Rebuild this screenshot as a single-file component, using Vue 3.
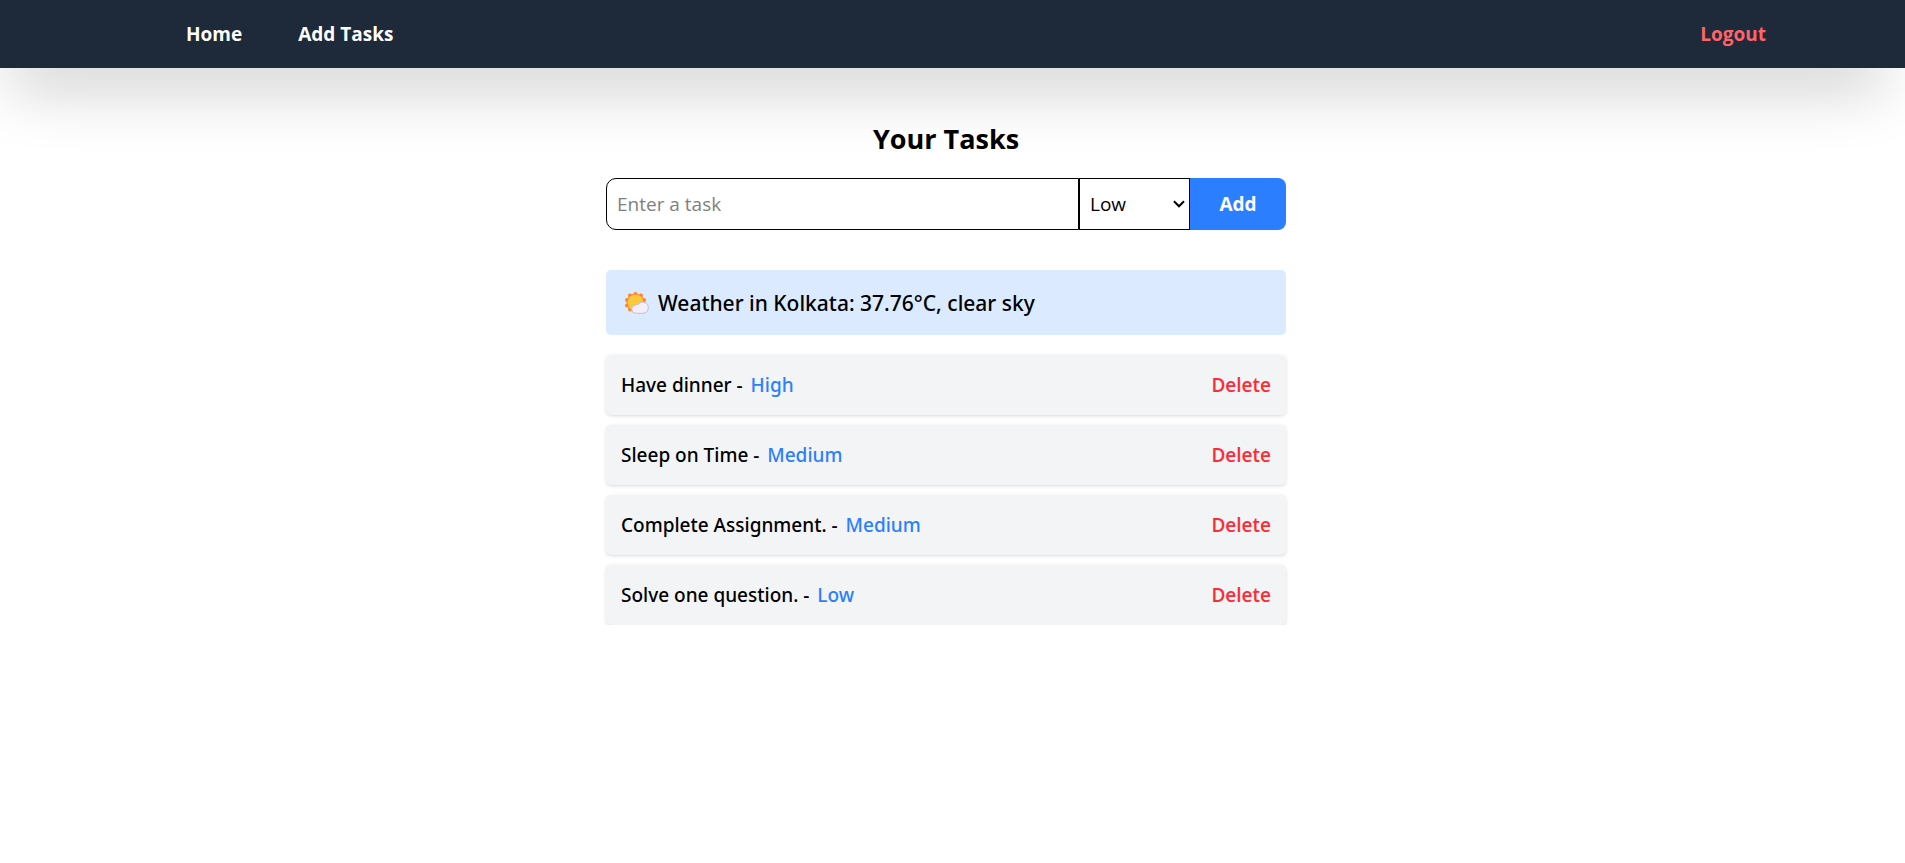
<script setup>
import { ref } from 'vue'

const newTask = ref('')
const newPriority = ref('Low')
const priorities = ['Low', 'Medium', 'High']
const tasks = ref([
  { id: 1, title: 'Have dinner', priority: 'High' },
  { id: 2, title: 'Sleep on Time', priority: 'Medium' },
  { id: 3, title: 'Complete Assignment.', priority: 'Medium' },
  { id: 4, title: 'Solve one question.', priority: 'Low' }
])

function addTask() {
  const title = newTask.value.trim()
  if (!title) return
  tasks.value.push({ id: Date.now(), title, priority: newPriority.value })
  newTask.value = ''
}

function removeTask(id) {
  tasks.value = tasks.value.filter((task) => task.id !== id)
}
</script>

<template>
  <div class="page">
    <nav class="navbar">
      <div class="links">
        <a href="#home">Home</a>
        <a href="#add">Add Tasks</a>
      </div>
      <button class="logout" type="button">Logout</button>
    </nav>

    <main class="content">
      <h1>Your Tasks</h1>

      <form class="task-form" @submit.prevent="addTask">
        <input v-model="newTask" type="text" placeholder="Enter a task" aria-label="Task" />
        <div class="select-wrap">
          <select v-model="newPriority" aria-label="Priority">
            <option v-for="p in priorities" :key="p">{{ p }}</option>
          </select>
          <svg class="chevron" viewBox="0 0 12 8" aria-hidden="true">
            <path d="M1 1.3 6 6.3 11 1.3" fill="none" stroke="#000" stroke-width="2" />
          </svg>
        </div>
        <button class="add" type="submit">Add</button>
      </form>

      <section class="weather">
        <svg class="weather-icon" viewBox="0 0 24 22" aria-hidden="true">
          <g fill="#ff822d">
            <circle cx="10.5" cy="10.5" r="9" />
            <circle cx="10.5" cy="2" r="2" />
            <circle cx="5" cy="3.5" r="2" />
            <circle cx="16" cy="3.5" r="2" />
            <circle cx="2" cy="8" r="2" />
            <circle cx="19" cy="8" r="2" />
            <circle cx="2" cy="13.5" r="2" />
            <circle cx="5" cy="17.5" r="2" />
          </g>
          <circle cx="10.5" cy="10.5" r="8" fill="#fcc83c" />
          <path
            d="M10.5 21.3a4.1 4.1 0 0 1-.6-8.1 4 4 0 0 1 3.2-.8 5.3 5.3 0 0 1 4.6-2.4 5.6 5.6 0 0 1 0 11.3Z"
            fill="#f3eef8"
            stroke="#c5bccf"
            stroke-width="1"
          />
        </svg>
        <span>Weather in Kolkata: 37.76°C, clear sky</span>
      </section>

      <ul class="tasks">
        <li v-for="task in tasks" :key="task.id">
          <span>{{ task.title }} - <span class="priority">{{ task.priority }}</span></span>
          <button type="button" @click="removeTask(task.id)">Delete</button>
        </li>
      </ul>
    </main>
  </div>
</template>

<style>
body {
  margin: 0;
  background: #fff;
}
</style>

<style scoped>
.page {
  font-family: 'Segoe UI', 'Open Sans', 'Noto Sans', sans-serif;
  font-size: 19px;
  line-height: 30px;
  color: #000;
}

.page * {
  box-sizing: border-box;
}

button,
input,
select {
  font: inherit;
  margin: 0;
}

button {
  border: 0;
  padding: 0;
  background: none;
  cursor: pointer;
}

.navbar {
  display: flex;
  justify-content: space-between;
  align-items: center;
  height: 68px;
  padding: 0 139px 0 186px;
  background: #1e2939;
  box-shadow: -6px 31px 63px -15px rgba(0, 0, 0, 0.25);
  font-weight: 700;
}

.links {
  display: flex;
  gap: 56px;
}

.links a {
  color: #fff;
  text-decoration: none;
}

.logout {
  color: #ff6467;
}

.page .content {
  width: 680px;
  max-width: 100%;
  margin: 0 auto;
  padding: 51px 13px 0 0;
  box-sizing: content-box;
}

h1 {
  margin: 0 0 19px;
  font-size: 27px;
  line-height: 40px;
  font-weight: 700;
  text-align: center;
}

.task-form {
  display: flex;
  height: 52px;
  margin-bottom: 40px;
}

.task-form input {
  flex: 1;
  min-width: 0;
  padding: 0 10px;
  border: 1px solid #000;
  border-radius: 10px 0 0 10px;
  background: #fff;
  color: #000;
  outline: none;
}

.task-form input::placeholder {
  color: #808080;
  opacity: 1;
}

.select-wrap {
  position: relative;
  width: 111px;
}

select {
  width: 100%;
  height: 100%;
  padding: 0 10px;
  border: 1px solid #000;
  border-radius: 0;
  background: #fff;
  color: #000;
  appearance: none;
}

.chevron {
  position: absolute;
  right: 5px;
  top: 50%;
  width: 12px;
  height: 8px;
  margin-top: -4px;
  pointer-events: none;
}

.add {
  width: 96px;
  border-radius: 0 8px 8px 0;
  background: #2b7fff;
  color: #fff;
  font-weight: 700;
}

.weather {
  display: flex;
  align-items: center;
  gap: 9px;
  height: 65px;
  margin-bottom: 20px;
  padding: 0 19px;
  border-radius: 5px;
  background: #dbeafe;
  font-family: 'Segoe UI', 'Noto Sans', sans-serif;
  font-size: 21px;
  font-weight: 500;
}

.weather-icon {
  width: 24px;
  height: 22px;
}

.tasks {
  display: flex;
  flex-direction: column;
  gap: 10px;
  margin: 0;
  padding: 0;
  list-style: none;
}

.tasks li {
  display: flex;
  justify-content: space-between;
  align-items: center;
  height: 60px;
  padding: 0 15px;
  border-radius: 5px;
  background: #f3f4f6;
  box-shadow: 0 1px 4px rgba(0, 0, 0, 0.1), 0 1px 3px -1px rgba(0, 0, 0, 0.1);
  font-family: 'Segoe UI', 'Noto Sans', sans-serif;
  font-weight: 500;
}

.priority {
  margin-left: 3px;
  color: #2b7fff;
}

.tasks button {
  color: #fb2c36;
  font-family: 'Segoe UI', 'Open Sans', sans-serif;
  font-weight: 600;
}
</style>
